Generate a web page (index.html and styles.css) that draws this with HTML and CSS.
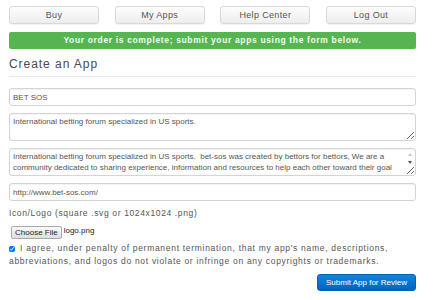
FILE: index.html
```html
<!DOCTYPE html>
<html lang="en">
<head>
    <meta charset="UTF-8">
    <meta name="viewport" content="width=device-width, initial-scale=1.0">
    <title>Create an App</title>
    <link rel="stylesheet" href="styles.css">
</head>
<body>
    <div class="container">
        <nav class="nav">
            <a class="nav-btn" href="#">Buy</a>
            <a class="nav-btn" href="#">My Apps</a>
            <a class="nav-btn" href="#">Help Center</a>
            <a class="nav-btn" href="#">Log Out</a>
        </nav>

        <div class="alert">Your order is complete; submit your apps using the form below.</div>

        <h1>Create an App</h1>

        <form id="appForm" class="app-form">
            <input type="text" class="field" value="BET SOS">
            <textarea class="field area">International betting forum specialized in US sports.</textarea>
            <div class="area-wrap">
                <textarea class="field area scroll">International betting forum specialized in US sports.  bet-sos was created by bettors for bettors, We are a community dedicated to sharing experience, information and resources to help each other toward their goal of becoming profitable sports bettors.</textarea>
                <span class="arrow up"></span>
                <span class="arrow down"></span>
            </div>
            <input type="text" class="field" value="http://www.bet-sos.com/">

            <label class="label">Icon/Logo (square .svg or 1024x1024 .png)</label>
            <div class="file-row">
                <span class="file-btn">Choose File</span>
                <span class="file-name">logo.png</span>
            </div>

            <p class="agree">
                <input type="checkbox" class="check" checked>
                I agree, under penalty of permanent termination, that my app's name, descriptions, abbreviations, and logos do not violate or infringe on any copyrights or trademarks.
            </p>

            <div class="actions">
                <button type="button" class="submit">Submit App for Review</button>
            </div>
        </form>
    </div>
</body>
</html>
```

FILE: styles.css
```css
body {
    margin: 0;
    padding: 0;
    background-color: #fff;
    font-family: "Liberation Sans", Arial, sans-serif;
    color: #555;
}
.container {
    width: 407px;
    padding: 6px 9px 0;
}
.nav {
    display: flex;
    justify-content: space-between;
}
.nav-btn {
    width: 88px;
    height: 16px;
    line-height: 16px;
    text-align: center;
    font-size: 9px;
    letter-spacing: 0.35px;
    color: #555;
    text-decoration: none;
    border: 1px solid #d8d8d8;
    border-radius: 3px;
    background: linear-gradient(#fdfdfd, #ededed);
    box-shadow: 0 1px 1px rgba(0, 0, 0, 0.05);
}
.alert {
    margin-top: 8px;
    height: 17px;
    line-height: 17px;
    text-align: center;
    background-color: #56b451;
    border-radius: 2px;
    color: #f4fbf3;
    font-size: 8.5px;
    font-weight: bold;
    letter-spacing: 0.65px;
}
h1 {
    margin: 8px 0 0;
    padding-bottom: 5px;
    font-size: 12px;
    font-weight: normal;
    letter-spacing: 0.95px;
    color: #4a4a4a;
    border-bottom: 1px solid #e8e8e8;
}
.app-form {
    display: flex;
    flex-direction: column;
    margin-top: 11px;
}
.field {
    box-sizing: border-box;
    width: 407px;
    height: 18px;
    margin: 0 0 7px;
    padding: 2px 3px;
    font-family: "Liberation Sans", Arial, sans-serif;
    font-size: 8px;
    color: #555;
    border: 1px solid #d4d4d4;
    border-radius: 3px;
    box-shadow: inset 0 1px 1px rgba(0, 0, 0, 0.05);
    outline: none;
}
.area {
    height: 28px;
    line-height: 11px;
    resize: vertical;
}
.area-wrap {
    position: relative;
}
.scroll {
    display: block;
    padding-right: 18px;
    overflow: hidden;
}
.arrow {
    position: absolute;
    right: 4px;
    width: 0;
    height: 0;
    border-left: 2px solid transparent;
    border-right: 2px solid transparent;
}
.arrow.up {
    top: 5px;
    border-bottom: 3px solid #c4c4c4;
}
.arrow.down {
    top: 13px;
    border-top: 3px solid #555;
}
.label {
    font-size: 8.5px;
    letter-spacing: 0.63px;
    color: #555;
}
.file-row {
    display: flex;
    align-items: flex-start;
    margin-top: 8px;
}
.file-btn {
    margin-left: 2px;
    padding: 0 3px;
    height: 11px;
    line-height: 11px;
    font-size: 8px;
    color: #222;
    border: 1px solid #aaa;
    border-radius: 2px;
    background: linear-gradient(#fafafa, #dedede);
}
.file-name {
    margin-left: 2px;
    font-size: 8px;
    line-height: 9px;
    color: #222;
}
.agree {
    margin: 3px 0 0;
    font-size: 8.5px;
    line-height: 13px;
    letter-spacing: 0.7px;
    color: #555;
}
.check {
    width: 6px;
    height: 6px;
    margin: 0 2px 0 0;
    vertical-align: middle;
}
.actions {
    display: flex;
    justify-content: flex-end;
    margin-top: 6px;
}
.submit {
    width: 99px;
    height: 17px;
    padding: 0;
    font-family: "Liberation Sans", Arial, sans-serif;
    font-size: 8px;
    color: #fff;
    border: 1px solid #0b5fb0;
    border-radius: 3px;
    background: linear-gradient(#0e86e0, #0064c0);
}
```
